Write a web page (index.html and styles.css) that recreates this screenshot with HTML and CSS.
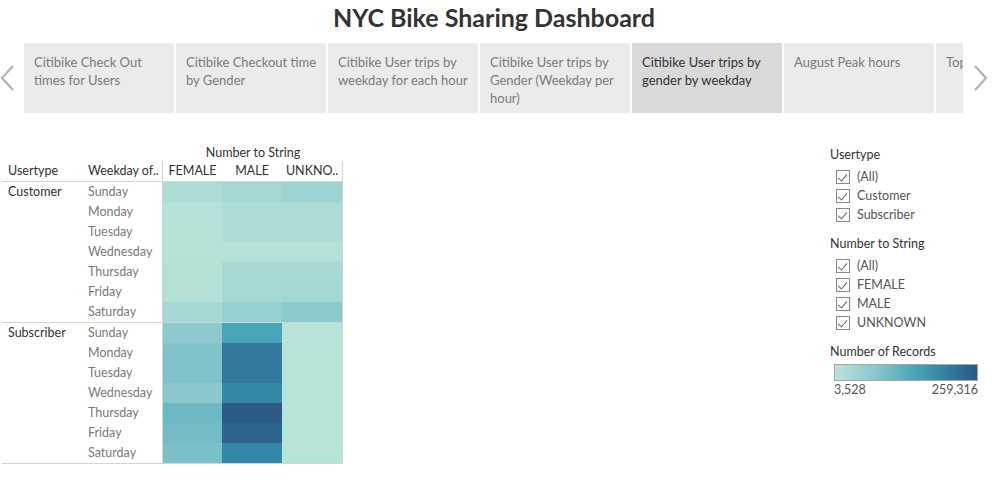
FILE: index.html
```html
<!DOCTYPE html>
<html>
<head>
<meta charset="utf-8">
<link rel="stylesheet" href="styles.css">
</head>
<body>
<h1 class="title">NYC Bike Sharing Dashboard</h1>
<div class="tabbar">
  <div class="arrow left"><svg width="16" height="28" viewBox="0 0 16 28"><polyline points="13,2 2,14 13,26" fill="none" stroke="#b3b3b3" stroke-width="2.2"/></svg></div>
  <div class="tabs">
    <div class="tab">Citibike Check Out times for Users</div>
    <div class="tab">Citibike Checkout time by Gender</div>
    <div class="tab">Citibike User trips by weekday for each hour</div>
    <div class="tab">Citibike User trips by Gender (Weekday per hour)</div>
    <div class="tab active">Citibike User trips by gender by weekday</div>
    <div class="tab">August Peak hours</div>
    <div class="tab">Top Stations</div>
  </div>
  <div class="arrow right"><svg width="16" height="28" viewBox="0 0 16 28"><polyline points="3,2 14,14 3,26" fill="none" stroke="#b3b3b3" stroke-width="2.2"/></svg></div>
</div>
<div class="main">
  <div class="heatmap">
    <div class="colgroup-title">Number to String</div>
    <div class="head-row">
      <div class="hcell c1">Usertype</div>
      <div class="hcell c2">Weekday of..</div>
      <div class="hcols">
        <div class="hcell">FEMALE</div>
        <div class="hcell">MALE</div>
        <div class="hcell">UNKNO..</div>
      </div>
    </div>
    <div class="group first">
      <div class="ut">Customer</div>
      <div class="days">
        <div>Sunday</div><div>Monday</div><div>Tuesday</div><div>Wednesday</div><div>Thursday</div><div>Friday</div><div>Saturday</div>
      </div>
      <div class="cells">
        <div style="background:#acdcd6"></div><div style="background:#a3d7d3"></div><div style="background:#9dd4d1"></div>
        <div style="background:#b5e2d8"></div><div style="background:#acdcd6"></div><div style="background:#acdcd6"></div>
        <div style="background:#b5e2d8"></div><div style="background:#acdcd6"></div><div style="background:#acdcd6"></div>
        <div style="background:#b5e2d8"></div><div style="background:#b5e2d8"></div><div style="background:#b5e2d8"></div>
        <div style="background:#b3e1d8"></div><div style="background:#a7d9d4"></div><div style="background:#a7d9d4"></div>
        <div style="background:#b3e1d8"></div><div style="background:#a7d9d4"></div><div style="background:#a3d7d3"></div>
        <div style="background:#a3d8d4"></div><div style="background:#96d0d0"></div><div style="background:#8ac9cc"></div>
      </div>
    </div>
    <div class="group">
      <div class="ut">Subscriber</div>
      <div class="days">
        <div>Sunday</div><div>Monday</div><div>Tuesday</div><div>Wednesday</div><div>Thursday</div><div>Friday</div><div>Saturday</div>
      </div>
      <div class="cells">
        <div style="background:#8ecacd"></div><div style="background:#47a4b9"></div><div style="background:#b8e3d9"></div>
        <div style="background:#80c3ca"></div><div style="background:#317a9c"></div><div style="background:#b8e3d9"></div>
        <div style="background:#80c3ca"></div><div style="background:#317a9c"></div><div style="background:#b8e3d9"></div>
        <div style="background:#8bc8cd"></div><div style="background:#3588a8"></div><div style="background:#b8e3d9"></div>
        <div style="background:#6cb8c4"></div><div style="background:#2c5985"></div><div style="background:#b8e3d9"></div>
        <div style="background:#73bcc7"></div><div style="background:#2e658c"></div><div style="background:#b8e3d9"></div>
        <div style="background:#7bc0c9"></div><div style="background:#3587aa"></div><div style="background:#b8e3d9"></div>
      </div>
    </div>
  </div>
  <div class="legend">
    <div class="ltitle">Usertype</div>
    <ul class="checks">
      <li><span class="box"></span>(All)</li>
      <li><span class="box"></span>Customer</li>
      <li><span class="box"></span>Subscriber</li>
    </ul>
    <div class="ltitle">Number to String</div>
    <ul class="checks">
      <li><span class="box"></span>(All)</li>
      <li><span class="box"></span>FEMALE</li>
      <li><span class="box"></span>MALE</li>
      <li><span class="box"></span>UNKNOWN</li>
    </ul>
    <div class="ltitle">Number of Records</div>
    <div class="ramp"></div>
    <div class="ramp-labels"><span>3,528</span><span>259,316</span></div>
  </div>
</div>
</body>
</html>
```
FILE: styles.css
```css
* { box-sizing: border-box; }
html, body { margin: 0; padding: 0; background: #fff; }
body {
  width: 997px;
  height: 488px;
  overflow: hidden;
  font-family: "Lato", "Liberation Sans", sans-serif;
  color: #333;
}
.title {
  margin: 0;
  padding-right: 9px;
  height: 36px;
  line-height: 34px;
  text-align: center;
  font-size: 25px;
  font-weight: 700;
  color: #333;
}
.tabbar {
  margin-top: 7px;
  display: flex;
  height: 70px;
}
.arrow {
  display: flex;
  align-items: center;
  height: 70px;
}
.arrow.left { width: 24px; justify-content: flex-start; }
.arrow.right { width: 34px; justify-content: flex-start; padding-left: 9px; }
.tabs {
  display: flex;
  gap: 2px;
  width: 939px;
  overflow: hidden;
}
.tab {
  flex: 0 0 150px;
  height: 70px;
  background: #ebebeb;
  color: #7a7a7a;
  font-size: 13px;
  line-height: 18px;
  padding: 10px 4px 0 10px;
  overflow: hidden;
}
.tab.active { background: #d9d9d9; color: #333; }
.main {
  display: flex;
  justify-content: space-between;
  margin-top: 32px;
}
.heatmap {
  margin-left: 2px;
  width: 341px;
  font-size: 12.5px;
}
.colgroup-title {
  margin-left: 161px;
  width: 180px;
  text-align: center;
  height: 16px;
  line-height: 16px;
  color: #333;
}
.head-row {
  display: flex;
  height: 21px;
  border-bottom: 1px solid #d4d4d4;
}
.hcell { line-height: 20px; color: #333; white-space: nowrap; }
.c1 { width: 80px; padding-left: 6px; }
.c2 { width: 80px; padding-left: 6px; }
.hcols {
  display: flex;
  border-left: 1px solid #d4d4d4;
  border-right: 1px solid #d4d4d4;
}
.hcols .hcell { width: 60px; text-align: center; }
.hcols .hcell:first-child { width: 59px; }
.group {
  display: flex;
  border-bottom: 1px solid #d4d4d4;
}
.ut {
  width: 80px;
  padding-left: 6px;
  line-height: 19px;
  color: #333;
}
.days {
  width: 80px;
  padding-left: 6px;
  color: #7a7a7a;
}
.days div { height: 20px; line-height: 20px; }
.cells {
  display: grid;
  grid-template-columns: 59px 60px 60px;
  grid-auto-rows: 20px;
  border-left: 1px solid #d4d4d4;
  border-right: 1px solid #d4d4d4;
}
.legend {
  width: 167px;
  margin-top: 2px;
  font-size: 12.5px;
}
.ltitle {
  height: 16px;
  line-height: 16px;
  color: #333;
}
.checks {
  list-style: none;
  margin: 4px 0 12px 0;
  padding: 0 0 0 6px;
}
.checks li {
  height: 19px;
  display: flex;
  align-items: center;
  color: #555;
}
.box {
  width: 14px;
  height: 14px;
  border: 1px solid #8a8a8a;
  margin-right: 7px;
  position: relative;
  background: #fff;
}
.box::after {
  content: "";
  position: absolute;
  left: 3px;
  top: 1px;
  width: 4px;
  height: 8px;
  border-right: 1.5px solid #666;
  border-bottom: 1.5px solid #666;
  transform: rotate(40deg);
}
.ramp {
  margin-top: 4px;
  margin-left: 4px;
  width: 144px;
  height: 17px;
  border: 1px solid #a8a8a0;
  background: linear-gradient(to right, #b9e3da 0%, #86c6cb 30%, #4aa6ba 55%, #33809f 78%, #2a5783 100%);
}
.ramp-labels {
  margin-left: 4px;
  width: 144px;
  display: flex;
  justify-content: space-between;
  line-height: 18px;
  color: #555;
}
```
